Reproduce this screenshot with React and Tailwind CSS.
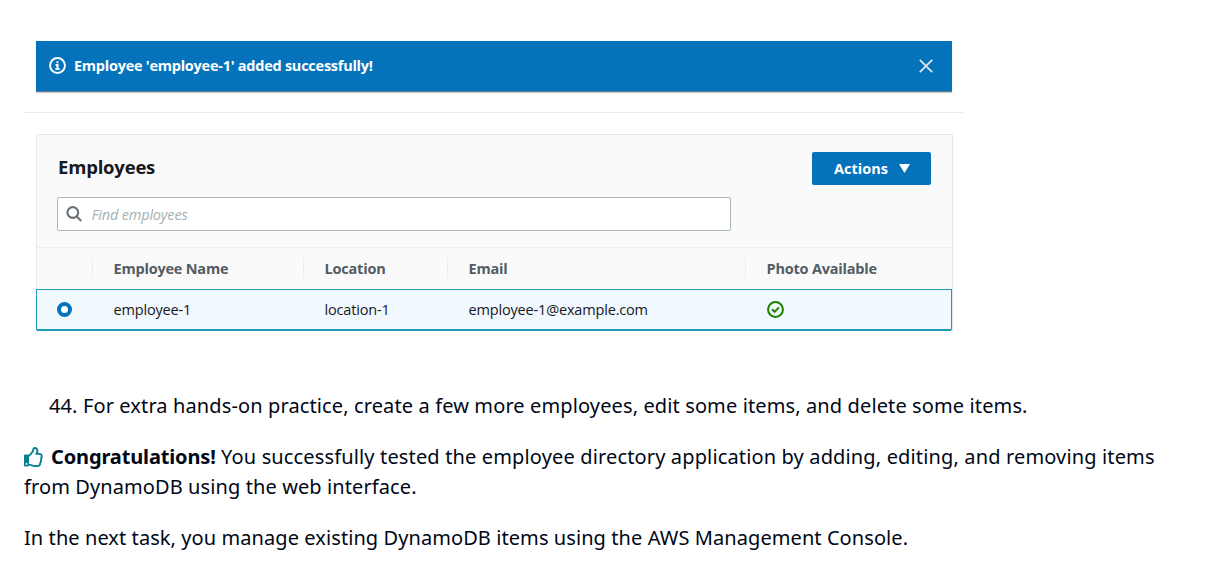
import React from "react";
import { FaRegThumbsUp } from "react-icons/fa";

const columns = [
  { title: "Employee Name", value: "employee-1", width: "w-[211px]" },
  { title: "Location", value: "location-1", width: "w-[144px]" },
  { title: "Email", value: "employee-1@example.com", width: "w-[298px]" },
  { title: "Photo Available", value: null, width: "flex-1" },
];

function InfoIcon() {
  return (
    <svg viewBox="0 0 16 16" className="size-[17px] -translate-y-px" fill="none" stroke="currentColor">
      <circle cx="8" cy="8" r="7" strokeWidth="1.8" />
      <path d="M6 11.3h4M6.2 7.6H8V11M7.1 5h1.8" strokeWidth="1.9" />
    </svg>
  );
}

function CheckIcon() {
  return (
    <svg viewBox="0 0 16 16" className="size-[17px] text-[#1d8102]" fill="none" stroke="currentColor" strokeWidth="1.9">
      <circle cx="8" cy="8" r="7" />
      <path d="M4.8 7.8l2.4 2.4 4-4.2" />
    </svg>
  );
}

function Banner() {
  return (
    <div className="ml-3 flex h-[51px] w-[916px] items-center border-b border-[#5f7f98] bg-[#0473bb] pl-[13px] pr-[19px] text-white shadow-[0_1px_1px_#00000030]">
      <InfoIcon />
      <span className="ml-2 text-[14.5px] font-bold tracking-[-0.25px]">Employee 'employee-1' added successfully!</span>
      <svg viewBox="0 0 14 14" className="ml-auto size-[14px] text-[#dfe5e8]" stroke="currentColor" strokeWidth="1.8">
        <path d="M.8.8l12.4 12.4M13.2.8L.8 13.2" />
      </svg>
    </div>
  );
}

function EmployeesPanel() {
  return (
    <div className="ml-3 mt-[21px] w-[917px] rounded-[1px] border border-[#e6e9e9] bg-[#fafafa]">
      <div className="h-[113px] border-b border-[#eaeded] pl-5 pr-[21px] pt-4">
        <div className="flex h-[34px] items-center justify-between">
          <h2 className="pb-0.5 pl-px text-[18.5px] font-bold tracking-[-0.2px] text-[#16191f]">Employees</h2>
          <button className="mt-px flex h-[33px] w-[119px] items-center rounded-[2px] bg-[#0473bb] pl-[22px] text-[14.5px] font-bold text-white">
            Actions
            <svg viewBox="0 0 10 8" className="ml-auto mr-[21px] h-[9px] w-[11px]" fill="currentColor">
              <path d="M0 0h10L5 8z" />
            </svg>
          </button>
        </div>
        <div className="mt-3 flex h-[34px] w-[674px] items-center rounded-[2px] border border-[#aab7b8] bg-white pl-2">
          <svg viewBox="0 0 16 16" className="size-4 text-[#687078]" fill="none" stroke="currentColor" strokeWidth="2.1">
            <circle cx="6.8" cy="6.5" r="5.4" />
            <path d="M10.7 10.4l4.6 4.6" />
          </svg>
          <span className="ml-[9.5px] pt-0.5 text-[14.5px] italic tracking-[-0.18px] text-[#a3b1b2]">Find employees</span>
        </div>
      </div>
      <div className="flex h-[41px] items-center pl-[55px] text-[14.5px] font-bold tracking-[-0.2px] text-[#545b64]">
        {columns.map((c) => (
          <div key={c.title} className={`-mt-0.5 h-5 border-l border-[#eaeded] pl-[20.5px] leading-[22px] ${c.width}`}>
            {c.title}
          </div>
        ))}
      </div>
      <div className="-mb-px -ml-px flex h-[42px] items-center rounded-b-[2px] border border-b-2 border-[#1f9cb5] bg-[#f1f8fe] pl-5 text-[14.5px] tracking-[-0.17px] text-[#16191f]">
        <div className="size-[15px] rounded-full border-[4.5px] border-[#0473bb] bg-white" />
        <div className="ml-5 flex flex-1 items-center">
          {columns.map((c) => (
            <div key={c.title} className={`border-l border-transparent pl-[20.5px] ${c.width}`}>
              {c.value ?? <CheckIcon />}
            </div>
          ))}
        </div>
      </div>
    </div>
  );
}

export default function App() {
  return (
    <main className="h-[568px] overflow-hidden bg-white px-6 pt-[41px] text-[#000716]">
      <div className="font-['Open_Sans',sans-serif]">
        <Banner />
        <div className="mt-5 h-px w-[939px] bg-[#e9ebed]" />
        <EmployeesPanel />
      </div>
      <div className="font-['Noto_Sans',sans-serif] text-[20px] leading-[30px]">
        <p className="mt-[60px] whitespace-nowrap pl-[25px] tracking-[0.12px]">
          44. For extra hands-on practice, create a few more employees, edit some items, and delete some items.
        </p>
        <p className="mt-[21px] whitespace-nowrap">
          <FaRegThumbsUp className="mr-[7px] inline size-5 align-[-3px] text-[#067f92]" />
          <strong className="font-bold tracking-[-0.14px]">Congratulations!</strong>
          <span className="tracking-[0.145px]"> You successfully tested the employee directory application by adding, editing, and removing items</span>
          <br />
          <span className="tracking-[0.1px]">from DynamoDB using the web interface.</span>
        </p>
        <p className="mt-[21px] whitespace-nowrap tracking-[0.08px]">In the next task, you manage existing DynamoDB items using the AWS Management Console.</p>
      </div>
    </main>
  );
}
